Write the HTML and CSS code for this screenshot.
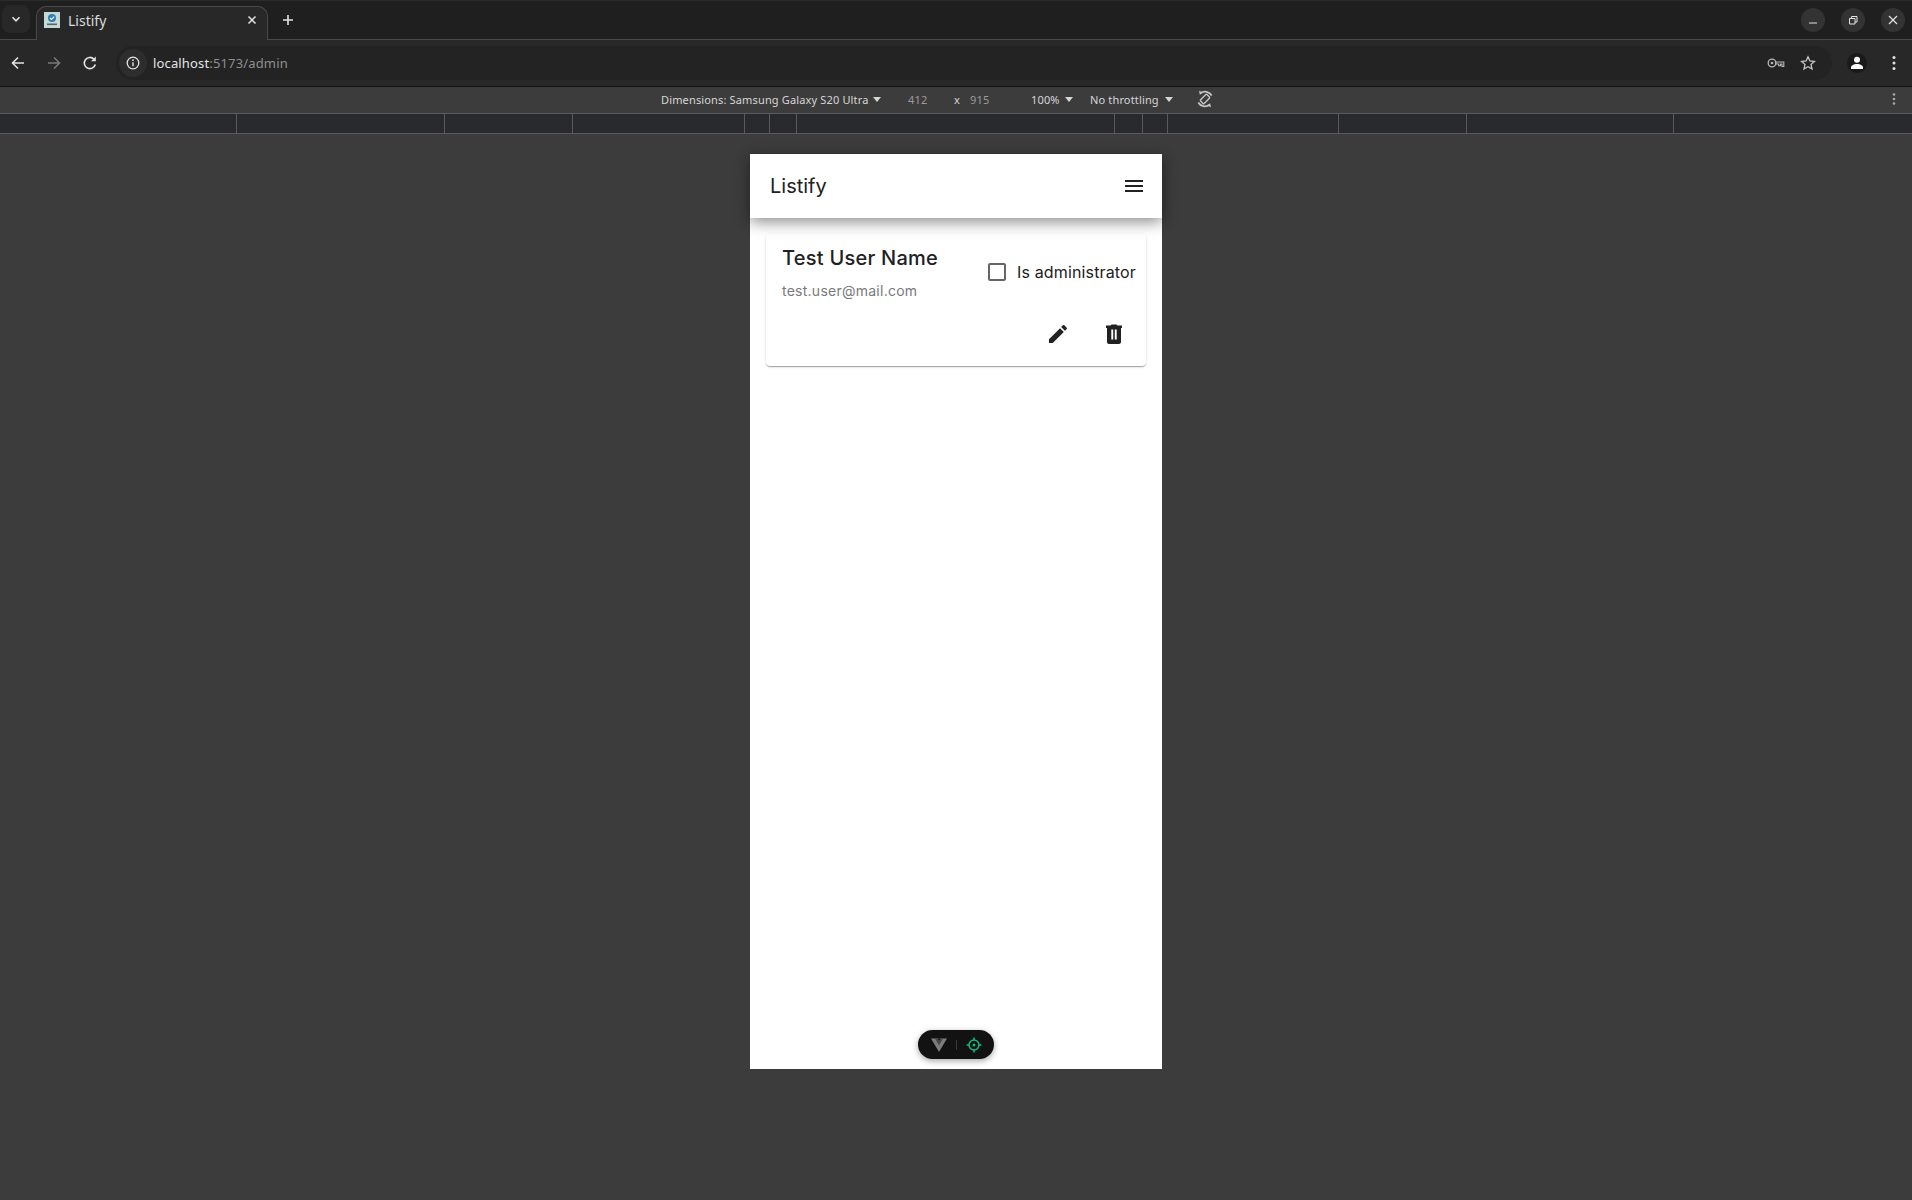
FILE: index.html
```html
<!DOCTYPE html>
<html>
<head>
  <title>Listify</title>
  <link rel="stylesheet" href="styles.css">
</head>
<body>
  <!-- browser tab strip -->
  <div class="tabstrip">
    <button class="tab-search">
      <svg width="10" height="10" viewBox="0 0 10 10"><path d="M1.500 3.200 5 6.800l3.500-3.600" fill="none" stroke="#e3e3e3" stroke-width="1.600"/></svg>
    </button>
    <div class="tab">
      <svg class="favicon" width="16" height="16" viewBox="0 0 16 16">
        <rect width="16" height="16" fill="#c4d9d6"/>
        <circle cx="8" cy="6" r="4" fill="#2a7fb8"/>
        <path d="M6 6l1.500 1.500L10.200 4.600" fill="none" stroke="#fff" stroke-width="1.100"/>
        <rect x="3" y="11.500" width="10" height="1.600" fill="#55686a"/>
      </svg>
      <span class="tab-title">Listify</span>
      <svg class="tab-close" width="10" height="10" viewBox="0 0 10 10"><path d="M1.500 1.500l7 7m0-7l-7 7" stroke="#e3e3e3" stroke-width="1.500"/></svg>
    </div>
    <svg class="new-tab" width="12" height="12" viewBox="0 0 12 12"><path d="M6 1v10M1 6h10" stroke="#e3e3e3" stroke-width="1.600"/></svg>
    <div class="window-controls">
      <span class="win-btn"><svg width="10" height="10" viewBox="0 0 10 10"><path d="M1 8h8" stroke="#e3e3e3" stroke-width="1"/></svg></span>
      <span class="win-btn"><svg width="10" height="10" viewBox="0 0 10 10"><path d="M1.500 3.500h5.500v5.500H1.500zM3.500 3.500V1.500H9V7H7" fill="none" stroke="#e3e3e3" stroke-width="1"/></svg></span>
      <span class="win-btn"><svg width="10" height="10" viewBox="0 0 10 10"><path d="M1 1l8 8m0-8l-8 8" stroke="#e3e3e3" stroke-width="1.200"/></svg></span>
    </div>
  </div>

  <!-- address bar -->
  <div class="toolbar">
    <svg class="nav-icon" width="16" height="16" viewBox="0 0 16 16"><path d="M14 8H3M8 2.500 2.500 8 8 13.500" fill="none" stroke="#e3e3e3" stroke-width="1.600"/></svg>
    <svg class="nav-icon" width="16" height="16" viewBox="0 0 16 16"><path d="M2 8h11M8 2.500 13.500 8 8 13.500" fill="none" stroke="#787878" stroke-width="1.600"/></svg>
    <svg class="nav-icon" width="16" height="16" viewBox="0 0 16 16"><path d="M13.300 9.500A5.600 5.600 0 1 1 12 4.200" fill="none" stroke="#e3e3e3" stroke-width="1.600"/><path d="M13.800 1.500v4.800H9z" fill="#e3e3e3"/></svg>
    <div class="omnibox">
      <span class="site-info">
        <svg width="14" height="14" viewBox="0 0 14 14"><circle cx="7" cy="7" r="5.800" fill="none" stroke="#e3e3e3" stroke-width="1.300"/><path d="M7 6.200v4" stroke="#e3e3e3" stroke-width="1.400"/><circle cx="7" cy="4.200" r=".9" fill="#e3e3e3"/></svg>
      </span>
      <span class="url"><span class="url-host">localhost</span>:5173/admin</span>
      <svg class="key-icon" width="18" height="12" viewBox="0 0 18 12"><circle cx="5" cy="6" r="3.800" fill="none" stroke="#b8b8b8" stroke-width="1.300"/><circle cx="5" cy="6" r="1.300" fill="#b8b8b8"/><path d="M8.800 5h8v4.500h-1.800V7h-1.500v1.800h-1.800V7H8.800z" fill="none" stroke="#b8b8b8" stroke-width="1.100"/></svg>
      <svg class="star-icon" width="16" height="16" viewBox="0 0 16 16"><path d="M8 1.800l1.900 4.200 4.500.5-3.400 3 1 4.500L8 11.700 4 14l1-4.500-3.400-3 4.500-.5z" fill="none" stroke="#c4c4c4" stroke-width="1.300"/></svg>
    </div>
    <span class="avatar">
      <svg width="14" height="14" viewBox="0 0 14 14"><circle cx="7" cy="3.800" r="3" fill="#fff"/><path d="M1 13v-1.700C1 9.500 4 8 7 8s6 1.500 6 3.300V13z" fill="#fff"/></svg>
    </span>
    <svg class="menu-dots" width="4" height="16" viewBox="0 0 4 16"><circle cx="2" cy="2.500" r="1.500" fill="#e3e3e3"/><circle cx="2" cy="8" r="1.500" fill="#e3e3e3"/><circle cx="2" cy="13.500" r="1.500" fill="#e3e3e3"/></svg>
  </div>

  <!-- device toolbar -->
  <div class="device-bar">
    <span class="device-name">Dimensions: Samsung Galaxy S20 Ultra</span>
    <span class="caret"></span>
    <span class="device-width">412</span>
    <span class="device-x">x</span>
    <span class="device-height">915</span>
    <span class="device-zoom">100%</span>
    <span class="caret"></span>
    <span class="device-throttle">No throttling</span>
    <span class="caret"></span>
    <svg class="rotate-icon" width="18" height="18" viewBox="0 0 18 18">
      <g fill="none" stroke="#c4c4c4">
        <rect x="6.500" y="4.500" width="5" height="9" rx=".8" stroke-width="1.400" transform="rotate(45 9 9)"/>
        <path d="M4.500 3.200A7.500 7.500 0 0 1 15.700 5.500M13.500 14.800A7.500 7.500 0 0 1 2.300 12.500" stroke-width="1.800"/>
      </g>
      <path d="M3 .8l3.300 1.400-2.400 2.800zM15 17.200l-3.300-1.400 2.400-2.800z" fill="#c4c4c4"/>
    </svg>
    <svg class="bar-dots" width="4" height="12" viewBox="0 0 4 12"><circle cx="2" cy="1.500" r="1.300" fill="#a8a8a8"/><circle cx="2" cy="6" r="1.300" fill="#a8a8a8"/><circle cx="2" cy="10.500" r="1.300" fill="#a8a8a8"/></svg>
  </div>

  <!-- media query ruler -->
  <div class="ruler">
    <span></span><span></span><span></span><span></span><span></span><span></span>
    <span></span><span></span><span></span><span></span><span></span><span></span>
  </div>

  <!-- emulated viewport -->
  <div class="viewport">
    <div class="phone">
      <header class="app-bar">
        <span class="app-title">Listify</span>
        <svg class="icon" width="24" height="24" viewBox="0 0 24 24"><path d="M3 18h18v-2H3v2zm0-5h18v-2H3v2zm0-7v2h18V6H3z"/></svg>
      </header>
      <main class="content">
        <div class="card">
          <div class="card-top">
            <div class="user-info">
              <div class="user-name">Test User Name</div>
              <div class="user-mail">test.user@mail.com</div>
            </div>
            <label class="admin-check">
              <svg class="check-box" width="24" height="24" viewBox="0 0 24 24"><path d="M19 5v14H5V5h14m0-2H5c-1.100 0-2 .9-2 2v14c0 1.100.9 2 2 2h14c1.100 0 2-.9 2-2V5c0-1.100-.9-2-2-2z"/></svg>
              <span>Is administrator</span>
            </label>
          </div>
          <div class="card-actions">
            <svg class="icon" width="24" height="24" viewBox="0 0 24 24"><path d="M3 17.250V21h3.750L17.810 9.940l-3.750-3.750L3 17.250zM20.710 7.040c.39-.39.39-1.020 0-1.410l-2.340-2.340a.996.996 0 0 0-1.410 0l-1.830 1.830 3.750 3.750 1.830-1.830z"/></svg>
            <svg class="icon" width="24" height="24" viewBox="0 0 24 24"><path fill-rule="evenodd" d="M5 20c0 1.100.9 2 2 2h10c1.100 0 2-.9 2-2V6H5v14zM9.300 7.500h1.900v10H9.300zM12.800 7.500h1.900v10h-1.900zM20 3.500h-4.500l-1-1h-5l-1 1H4v2.500h16V3.500z"/></svg>
          </div>
        </div>
      </main>
      <div class="dev-pill">
        <svg width="16" height="14" viewBox="0 0 16 14"><path d="M0 .5h16L8 14z" fill="#7d7d7d"/><path d="M4 .5 8 7.500 12 .5H9.500L8 3 6.500 .5z" fill="#4a4a4a"/><path d="M6.500 .5 8 3 9.500 .5z" fill="#121212"/></svg>
        <span class="pill-sep"></span>
        <svg width="16" height="16" viewBox="0 0 16 16"><circle cx="8" cy="8" r="5" fill="none" stroke="#10b981" stroke-width="1.500"/><circle cx="8" cy="8" r="1.500" fill="#10b981"/><path d="M8 .5v3M8 12.500v3M.5 8h3M12.500 8h3" stroke="#10b981" stroke-width="1.500"/></svg>
      </div>
    </div>
  </div>
</body>
</html>
```

FILE: styles.css
```css
* {
  box-sizing: border-box;
}

html,
body {
  height: 100%;
}

body {
  margin: 0;
  background-color: #3c3c3c;
  font-family: "Noto Sans", sans-serif;
  overflow: hidden;
}

svg {
  display: block;
  flex-shrink: 0;
}

/* browser chrome */
.tabstrip {
  height: 40px;
  display: flex;
  align-items: flex-end;
  background-color: #1f1f1f;
  border-top: 1px solid #2b2b2b;
  border-bottom: 1px solid #4a4a4a;
  position: relative;
}

.tab-search {
  width: 28px;
  height: 28px;
  margin: 0 6px 6px 2px;
  padding: 0;
  border: none;
  border-radius: 8px;
  background-color: #282828;
  display: flex;
  align-items: center;
  justify-content: center;
}

.tab {
  width: 232px;
  height: 34px;
  margin-bottom: -1px;
  padding: 0 10px 7px 7px;
  display: flex;
  align-items: center;
  background-color: #282828;
  border: 1px solid #4a4a4a;
  border-bottom: none;
  border-radius: 10px 10px 0 0;
}

.tab-title {
  margin-left: 8px;
  flex: 1;
  color: #dcdcdc;
  font-size: 14px;
}

.new-tab {
  margin: 0 0 13px 14px;
}

.window-controls {
  margin-left: auto;
  margin-right: 7px;
  margin-bottom: 7px;
  display: flex;
  gap: 16px;
}

.win-btn {
  width: 24px;
  height: 24px;
  border-radius: 50%;
  background-color: #333;
  display: flex;
  align-items: center;
  justify-content: center;
}

.toolbar {
  height: 47px;
  display: flex;
  align-items: center;
  padding-left: 10px;
  background-color: #282828;
  border-bottom: 1px solid #111;
}

.nav-icon {
  margin-right: 20px;
}

.omnibox {
  width: 1716px;
  height: 34px;
  margin-left: -2px;
  display: flex;
  align-items: center;
  padding: 0 16px 0 3px;
  border-radius: 17px;
  background-color: #232323;
}

.site-info {
  width: 28px;
  height: 28px;
  border-radius: 50%;
  background-color: #2d2d2d;
  display: flex;
  align-items: center;
  justify-content: center;
}

.url {
  margin-left: 6px;
  flex: 1;
  color: #8f8f8f;
  font-size: 13px;
  letter-spacing: 0.15px;
}

.url-host {
  color: #e3e3e3;
}

.key-icon {
  margin-right: 15px;
}

.avatar {
  width: 20px;
  height: 20px;
  margin-left: 15px;
  border-radius: 50%;
  background-color: #1a1a1a;
  display: flex;
  align-items: center;
  justify-content: center;
}

.menu-dots {
  margin-left: 25px;
}

/* devtools device toolbar */
.device-bar {
  height: 27px;
  display: flex;
  align-items: center;
  padding: 0 0 2px 661px;
  background-color: #3c3c3c;
  border-bottom: 1px solid #5a5a5a;
  color: #d6d6d6;
  font-size: 11px;
  letter-spacing: 0.15px;
  white-space: nowrap;
}

.device-name {
  width: 207px;
}

.caret {
  width: 0;
  height: 0;
  margin-left: 5px;
  border-left: 4px solid transparent;
  border-right: 4px solid transparent;
  border-top: 5px solid #d6d6d6;
}

.device-width {
  width: 19px;
  margin-left: 27px;
  color: #9a9a9a;
}

.device-x {
  width: 6px;
  margin-left: 27px;
}

.device-height {
  width: 20px;
  margin-left: 10px;
  color: #9a9a9a;
}

.device-zoom {
  width: 29px;
  margin-left: 41px;
}

.device-throttle {
  width: 70px;
  margin-left: 17px;
}

.rotate-icon {
  margin-left: 23px;
}

.bar-dots {
  margin-left: auto;
  margin-right: 16px;
}

.ruler {
  height: 20px;
  display: grid;
  grid-template-columns: 237px 208px 128px 172px 25px 27px 318px 28px 25px 171px 128px 207px;
  background-color: #292a2d;
  border-bottom: 1px solid #5a5a5a;
}

.ruler span {
  border-right: 1px solid #5a5a5a;
}

/* emulated page */
.viewport {
  padding-top: 20px;
  display: flex;
  justify-content: center;
}

.phone {
  width: 412px;
  height: 915px;
  position: relative;
  background-color: #fff;
  font-family: Inter, sans-serif;
  color: #212121;
}

.icon {
  fill: #212121;
}

.app-bar {
  height: 64px;
  display: flex;
  align-items: center;
  justify-content: space-between;
  padding: 0 16px 0 20px;
  background-color: #fff;
  box-shadow: 0 4px 14px rgba(0, 0, 0, 0.45);
  position: relative;
}

.app-title {
  font-size: 20px;
}

.content {
  padding: 16px;
}

.card {
  height: 132px;
  border-radius: 4px;
  background-color: #fff;
  box-shadow: 0 2px 1px -1px rgba(0, 0, 0, 0.2), 0 1px 1px 0 rgba(0, 0, 0, 0.14), 0 1px 3px 0 rgba(0, 0, 0, 0.12);
}

.card-top {
  display: flex;
  justify-content: space-between;
  align-items: center;
  padding: 12px 10px 0 16px;
}

.user-name {
  font-size: 20px;
  font-weight: 450;
  letter-spacing: 0.25px;
}

.user-mail {
  margin-top: 12px;
  font-size: 14px;
  color: #7a7a7a;
  letter-spacing: 0.25px;
}

.admin-check {
  margin-top: -2px;
  display: flex;
  align-items: center;
  gap: 8px;
  font-size: 16px;
  letter-spacing: 0.15px;
}

.check-box {
  fill: #666;
}

.card-actions {
  margin-top: 23px;
  display: flex;
  justify-content: flex-end;
  gap: 32px;
  padding-right: 20px;
}

/* vite dev overlay */
.dev-pill {
  position: absolute;
  left: 168px;
  bottom: 10px;
  width: 76px;
  height: 29px;
  display: flex;
  align-items: center;
  justify-content: center;
  gap: 9px;
  border-radius: 15px;
  background-color: #121212;
  box-shadow: 0 2px 6px rgba(0, 0, 0, 0.35);
}

.pill-sep {
  width: 1px;
  height: 10px;
  background-color: #3a3a3a;
}
```
